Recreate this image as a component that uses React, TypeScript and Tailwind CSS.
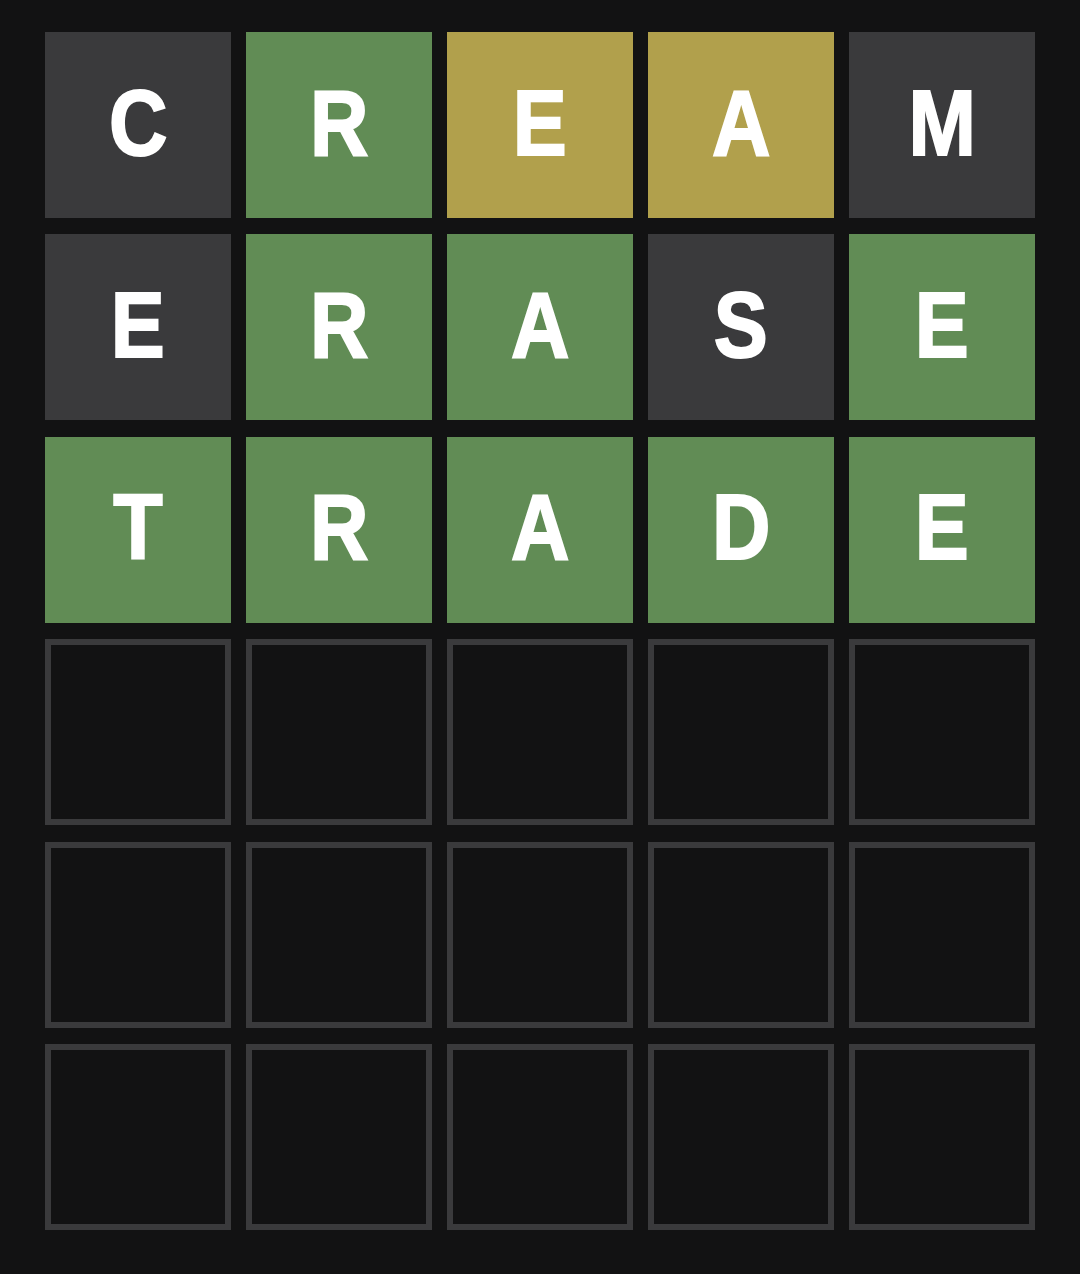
import React from 'react';

type TileState = 'absent' | 'correct' | 'present' | 'empty';

const rows: { letter: string; state: TileState }[][] = [
  [
    { letter: 'C', state: 'absent' },
    { letter: 'R', state: 'correct' },
    { letter: 'E', state: 'present' },
    { letter: 'A', state: 'present' },
    { letter: 'M', state: 'absent' },
  ],
  [
    { letter: 'E', state: 'absent' },
    { letter: 'R', state: 'correct' },
    { letter: 'A', state: 'correct' },
    { letter: 'S', state: 'absent' },
    { letter: 'E', state: 'correct' },
  ],
  [
    { letter: 'T', state: 'correct' },
    { letter: 'R', state: 'correct' },
    { letter: 'A', state: 'correct' },
    { letter: 'D', state: 'correct' },
    { letter: 'E', state: 'correct' },
  ],
];

// pad out to six guesses
while (rows.length < 6) {
  rows.push(Array.from({ length: 5 }, () => ({ letter: '', state: 'empty' as TileState })));
}

const tileClass: Record<TileState, string> = {
  absent: 'bg-[#3a3a3c]',
  correct: 'bg-[#618c55]',
  present: 'bg-[#b1a04c]',
  empty: 'border-[6px] border-[#3a3a3c]',
};

const Tile = ({ letter, state }: { letter: string; state: TileState }) => (
  <div
    className={`w-[186px] h-[186px] flex items-center justify-center pb-[5px] text-white font-bold text-[92px] leading-none ${tileClass[state]}`}
  >
    <span className="inline-block scale-x-[0.88] [-webkit-text-stroke:2px_white]">{letter}</span>
  </div>
);

export default function App() {
  return (
    <div
      className="min-h-[1274px] w-full bg-[#121213] flex justify-center pt-[32px]"
      style={{ fontFamily: '"Liberation Sans", Arial, sans-serif' }}
    >
      <div className="grid grid-cols-[repeat(5,186px)] gap-x-[15px] gap-y-[16.4px] h-fit">
        {rows.flatMap((row, r) =>
          row.map((tile, c) => <Tile key={`${r}-${c}`} letter={tile.letter} state={tile.state} />)
        )}
      </div>
    </div>
  );
}
